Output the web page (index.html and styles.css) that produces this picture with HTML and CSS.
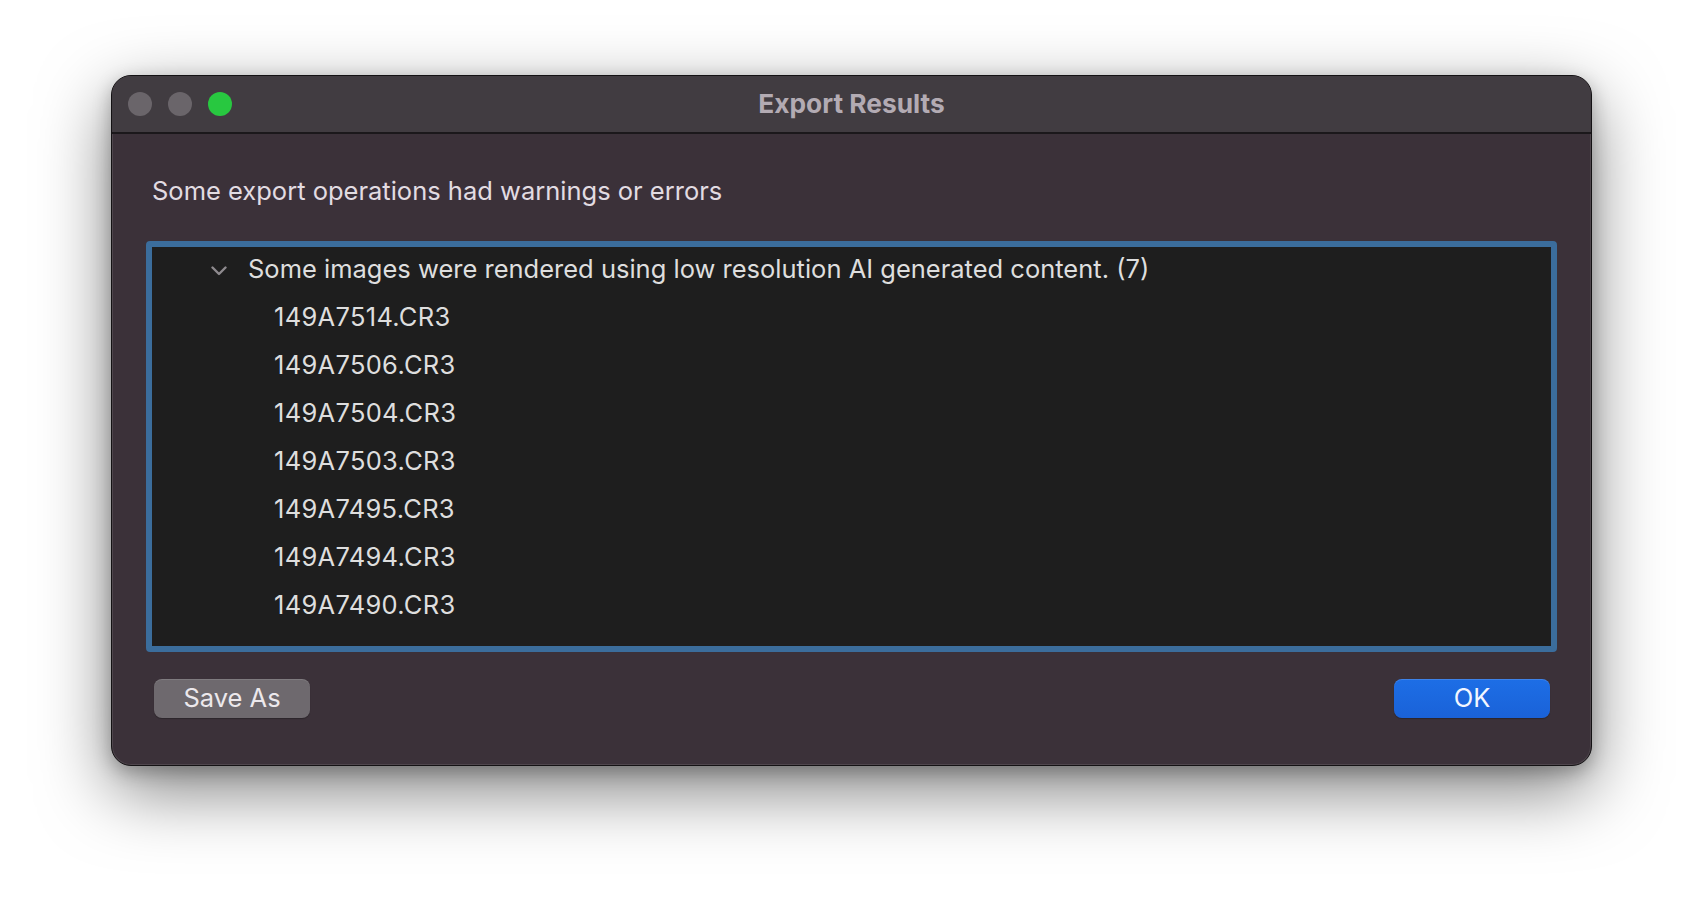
FILE: index.html
```html
<!DOCTYPE html>
<html lang="en">
<head>
<meta charset="utf-8">
<title>Export Results</title>
<link rel="stylesheet" href="styles.css">
</head>
<body>
<div class="stage">
  <div class="window">
    <div class="titlebar">
      <div class="lights">
        <span class="light gray"></span>
        <span class="light gray"></span>
        <span class="light green"></span>
      </div>
      <div class="title">Export Results</div>
      <div class="spacer"></div>
    </div>
    <div class="content">
      <div class="message">Some export operations had warnings or errors</div>
      <div class="listbox">
        <div class="row header">
          <svg class="chev" width="16" height="10" viewBox="0 0 16 10"><polyline points="1.5,1.5 8,8 14.5,1.5" fill="none" stroke="#8e8a8e" stroke-width="2.4" stroke-linecap="round" stroke-linejoin="round"/></svg>
          <span>Some images were rendered using low resolution AI generated content. (7)</span>
        </div>
        <div class="row item">149A7514.CR3</div>
        <div class="row item">149A7506.CR3</div>
        <div class="row item">149A7504.CR3</div>
        <div class="row item">149A7503.CR3</div>
        <div class="row item">149A7495.CR3</div>
        <div class="row item">149A7494.CR3</div>
        <div class="row item">149A7490.CR3</div>
      </div>
      <div class="buttons">
        <button class="btn secondary">Save As</button>
        <button class="btn primary">OK</button>
      </div>
    </div>
  </div>
</div>
</body>
</html>
```

FILE: styles.css
```css
html, body {
  margin: 0;
  padding: 0;
  background: #ffffff;
}
body {
  width: 1704px;
  height: 914px;
  overflow: hidden;
  font-family: "Inter", "Liberation Sans", sans-serif;
}
.stage {
  padding: 75px 0 0 111px;
}
.window {
  width: 1481px;
  height: 691px;
  box-sizing: border-box;
  border: 1px solid #141214;
  border-radius: 20px;
  background: #3b3139;
  box-shadow: 0 24px 70px rgba(0, 0, 0, 0.5), 0 6px 18px rgba(0, 0, 0, 0.25), inset 0 0 0 1px rgba(255, 255, 255, 0.10);
  overflow: hidden;
  display: flex;
  flex-direction: column;
}
.titlebar {
  height: 56px;
  flex: none;
  background: #413c41;
  border-bottom: 2px solid #1b181b;
  display: grid;
  grid-template-columns: 1fr auto 1fr;
  align-items: center;
}
.lights {
  display: flex;
  gap: 16px;
  padding-left: 16px;
}
.light {
  width: 24px;
  height: 24px;
  border-radius: 50%;
}
.light.gray { background: #6a656a; }
.light.green { background: #28c840; }
.title {
  font-weight: 700;
  font-size: 26.3px;
  color: #b3abb3;
  transform: translateY(-1px);
}
.content {
  flex: 1;
  padding: 40px 34px 0 34px;
  display: flex;
  flex-direction: column;
}
.message {
  font-size: 25.5px;
  line-height: 34px;
  color: #e2dce2;
  padding-left: 6px;
}
.listbox {
  margin-top: 33px;
  height: 411px;
  box-sizing: border-box;
  border: 6px solid #3b6d9c;
  border-radius: 4px;
  background: #1e1e1e;
  padding-top: 0;
}
.row {
  height: 48px;
  display: flex;
  align-items: center;
  font-size: 25.5px;
  color: #dedede;
}
.header {
  margin-top: -3px;
  padding-left: 59px;
}
.header .chev {
  margin-right: 21px;
  margin-top: 5px;
}
.item {
  padding-left: 122px;
  letter-spacing: 0.3px;
}
.buttons {
  margin-top: 27px;
  display: flex;
  justify-content: space-between;
  padding: 0 7px 0 8px;
}
.btn {
  width: 156px;
  height: 39px;
  border: none;
  border-radius: 8px;
  font-family: "Inter", "Liberation Sans", sans-serif;
  font-size: 25.5px;
  padding: 0 0 3px 0;
  cursor: default;
}
.secondary {
  background: #6e696e;
  color: #ece8ec;
  box-shadow: inset 0 1px 0 rgba(255, 255, 255, 0.12), 0 1px 1px rgba(0, 0, 0, 0.25);
}
.primary {
  background: linear-gradient(#1d6ee6, #1a62d8);
  color: #f2f6ff;
  box-shadow: inset 0 1px 0 rgba(255, 255, 255, 0.15), 0 1px 1px rgba(0, 0, 0, 0.25);
}
```
